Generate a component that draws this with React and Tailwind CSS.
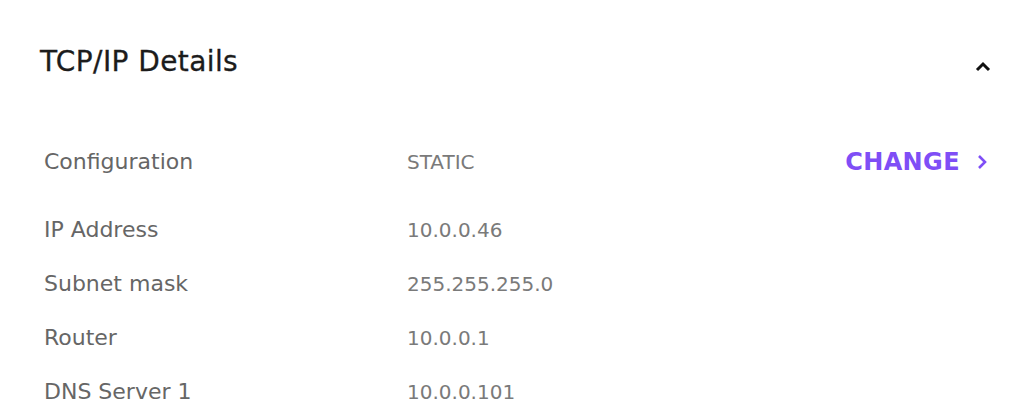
export default function App() {
  const rows = [
    ['IP Address', '10.0.0.46'],
    ['Subnet mask', '255.255.255.0'],
    ['Router', '10.0.0.1'],
    ['DNS Server 1', '10.0.0.101'],
  ];
  return (
    <div className="h-[412px] w-[1024px] overflow-hidden bg-white font-['DejaVu_Sans',sans-serif]">
      <div className="flex items-start justify-between pl-[40px] pr-[32px] pt-[44px]">
        <h2 className="text-[28px] leading-[36px] tracking-[0.4px] text-[#1c1c1c] [-webkit-text-stroke:0.3px_#1c1c1c]">TCP/IP Details</h2>
        <svg className="mt-[16px]" width="18" height="12" viewBox="0 0 18 12" fill="none">
          <path d="M3 10 L9 4 L15 10" stroke="#111" strokeWidth="3" />
        </svg>
      </div>
      <div className="mt-[64px] flex items-center pl-[44px] pr-[36px]">
        <span className="w-[363px] text-[22px] leading-[32px] text-[#666]">Configuration</span>
        <span className="flex-1 text-[20px] leading-[32px] text-[#7a7a7a]">STATIC</span>
        <span className="flex items-center gap-[16px] text-[24px] font-bold tracking-[0.4px] text-[#7f4ef6]">
          CHANGE
          <svg width="12" height="16" viewBox="0 0 12 16" fill="none">
            <path d="M3 2 L9 8 L3 14" stroke="#7f4ef6" strokeWidth="2.6" />
          </svg>
        </span>
      </div>
      <div className="mt-[34px] flex flex-col gap-[22px] pl-[44px]">
        {rows.map(([k, v]) => (
          <div key={k} className="flex items-center">
            <span className="w-[363px] text-[22px] leading-[32px] text-[#666]">{k}</span>
            <span className="text-[20px] leading-[32px] text-[#7a7a7a]">{v}</span>
          </div>
        ))}
      </div>
    </div>
  );
}
